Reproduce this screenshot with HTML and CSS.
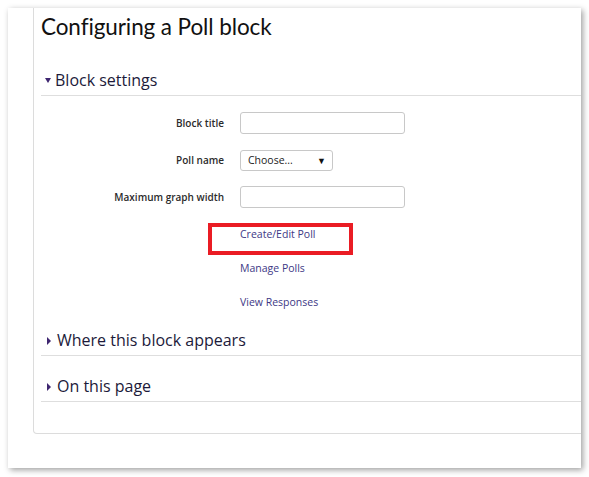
FILE: index.html
```html
<!DOCTYPE html>
<html>
<head>
<meta charset="utf-8">
<link rel="stylesheet" href="styles.css">
</head>
<body>
<div class="frame">
  <div class="card">
    <h1 class="title">Configuring a Poll block</h1>

    <div class="section-head open"><span class="tri-down"></span><span>Block settings</span></div>

    <div class="form">
      <div class="row"><label class="label">Block title</label><div class="input wide"></div></div>
      <div class="row"><label class="label">Poll name</label><div class="input select"><span>Choose...</span><span class="arrow">&#9660;</span></div></div>
      <div class="row"><label class="label">Maximum graph width</label><div class="input wide"></div></div>
      <div class="links">
        <div class="link-row highlight"><a class="link">Create/Edit Poll</a><span class="redbox"></span></div>
        <div class="link-row"><a class="link">Manage Polls</a></div>
        <div class="link-row"><a class="link">View Responses</a></div>
      </div>
    </div>

    <div class="section-head"><span class="tri-right"></span><span>Where this block appears</span></div>
    <div class="section-head"><span class="tri-right"></span><span>On this page</span></div>
  </div>
</div>
</body>
</html>
```
FILE: styles.css
```css
html, body {
  margin: 0;
  padding: 0;
  background: #ffffff;
}
body {
  width: 589px;
  height: 477px;
  overflow: hidden;
  font-family: "Open Sans", "Liberation Sans", sans-serif;
}
.frame {
  margin: 8px 0 0 8px;
  width: 573px;
  height: 460px;
  background: #fff;
  box-shadow: 2px 2px 6px rgba(0,0,0,0.38);
  overflow: hidden;
}
.card {
  margin-left: 25px;
  width: 620px;
  border: 1px solid #dcdcdc;
  border-top: none;
  border-radius: 0 0 4px 4px;
  padding: 0 0 31px 7px;
}
.title {
  margin: 0;
  padding-top: 4px;
  font-family: "Lato", "Open Sans", sans-serif;
  font-weight: 400;
  font-size: 22.5px;
  line-height: 30px;
  color: #111;
  letter-spacing: -0.1px;
}
.section-head {
  display: flex;
  align-items: center;
  width: 540px;
  height: 24px;
  padding-bottom: 3px;
  border-bottom: 1px solid #dedede;
  font-size: 16px;
  color: #1c1a3a;
  margin-top: 18px;
}
.section-head.open {
  margin-top: 26px;
}
.tri-down {
  width: 0;
  height: 0;
  margin: 1px 4px 0 4px;
  border-left: 3.5px solid transparent;
  border-right: 3.5px solid transparent;
  border-top: 5px solid #3f2670;
}
.tri-right {
  width: 0;
  height: 0;
  margin: 1px 6px 0 6px;
  border-top: 4px solid transparent;
  border-bottom: 4px solid transparent;
  border-left: 4px solid #3f2670;
}
.form {
  padding-top: 16px;
}
.row {
  display: flex;
  align-items: center;
  gap: 16px;
  height: 22px;
  margin-bottom: 15px;
}
.label {
  width: 183px;
  text-align: right;
  font-size: 10px;
  font-weight: 600;
  color: #2b2b2b;
}
.input {
  box-sizing: border-box;
  height: 22px;
  border: 1px solid #c8c8c8;
  border-radius: 3px;
  background: #fff;
}
.wide {
  width: 165px;
}
.select {
  width: 93px;
  height: 21px;
  display: flex;
  align-items: center;
  justify-content: space-between;
  padding: 0 6px 0 7px;
  font-size: 10.5px;
  color: #222;
}
.arrow {
  font-size: 9px;
  color: #111;
}
.links {
  padding-top: 3px;
  padding-left: 199px;
}
.link-row {
  position: relative;
  height: 16px;
  line-height: 16px;
  font-size: 11px;
  margin-bottom: 18px;
}
.link-row:last-child {
  margin-bottom: 0;
}
.link {
  font-size: 10.5px;
  line-height: 16px;
  color: #3d3885;
  text-decoration: none;
}
.redbox {
  position: absolute;
  left: -32px;
  top: -3px;
  width: 145px;
  height: 32px;
  box-sizing: border-box;
  border: 4px solid #ea1c24;
}
```
